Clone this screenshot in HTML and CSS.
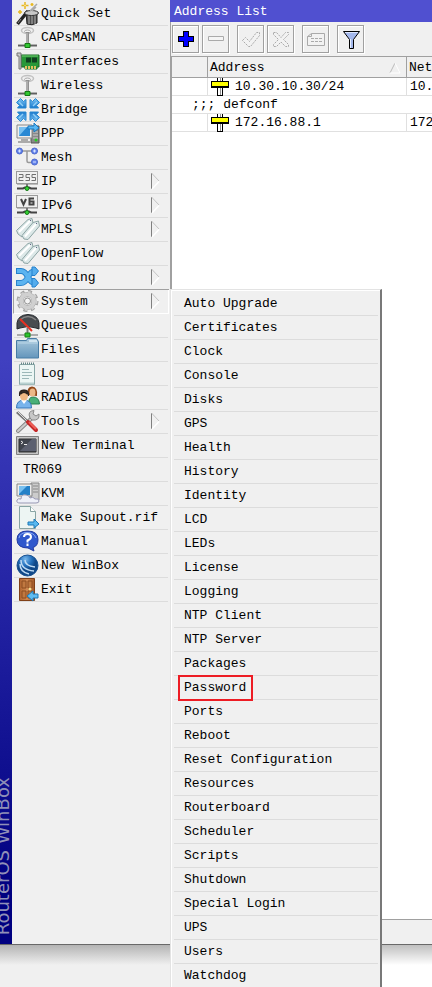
FILE: index.html
```html
<!DOCTYPE html>
<html lang="en">
<head>
<meta charset="utf-8">
<meta name="viewport" content="width=device-width, initial-scale=1">
<title>RouterOS WinBox</title>
<link rel="stylesheet" href="styles.css">
</head>
<body>
<svg class="defs" aria-hidden="true">
  <defs>
    <linearGradient id="sky" x2="0" y2="1"><stop offset="0" stop-color="#7cc4f4"/><stop offset="1" stop-color="#1878cc"/></linearGradient>
    <linearGradient id="folder" x2="0" y2="1"><stop offset="0" stop-color="#a8c8dc"/><stop offset="1" stop-color="#6496bc"/></linearGradient>
    <linearGradient id="wood" x2="1" y2="0"><stop offset="0" stop-color="#b06430"/><stop offset=".5" stop-color="#d08850"/><stop offset="1" stop-color="#a05828"/></linearGradient>
    <radialGradient id="globe" cx=".4" cy=".2"><stop offset="0" stop-color="#78b8ec"/><stop offset=".6" stop-color="#2470bc"/><stop offset="1" stop-color="#104888"/></radialGradient>
    <symbol id="antenna" viewBox="0 0 24 24">
      <ellipse cx="11.500" cy="4.500" rx="6" ry="3" fill="none" stroke="#c0c0c0" stroke-width="1.500"/>
      <ellipse cx="11.500" cy="5.500" rx="3" ry="1.500" fill="none" stroke="#a8a8a8"/>
      <path d="M11.500 6v12" stroke="#909090" stroke-width="3"/>
      <path d="M11 7v10" stroke="#c8c8c8"/>
      <path d="M2 19.500h19" stroke="#606060" stroke-width="2"/>
      <path d="M2 18.500h19" stroke="#b0b0b0"/>
      <path d="M9 17.500h5v4h-5z" fill="#32c832" stroke="#147814"/>
    </symbol>
    <symbol id="tags" viewBox="0 0 24 24">
      <g fill="#dce8e8" stroke="#8ca4a4" stroke-linejoin="round">
        <path d="M.500 12.500L12 1.500L16 .500L17 5L6 19L2 16Z"/>
        <path d="M6 17.500L17 4.500L22.500 3L23.500 8L12 21.500L8 21Z"/>
      </g>
      <path d="M3 14L14 3M9 18.500L20 6" stroke="#fff" stroke-width="2"/>
      <path d="M14 2.500h1M20 5.500h1" stroke="#668"/>
    </symbol>
    <symbol id="netplug" viewBox="0 0 24 24">
      <rect x=".500" y="1.500" width="21" height="12" fill="#f0f0f0" stroke="#9a9a9a"/>
      <path d="M1 14.500h21" stroke="#bbb"/>
      <path d="M11 14v4" stroke="#777" stroke-width="2"/>
      <path d="M1 18.500h6l2-1h4l2 1h6" fill="none" stroke="#444" stroke-width="2"/>
      <circle cx="11" cy="18.500" r="2" fill="#32d232" stroke="#147814"/>
    </symbol>
    <symbol id="sub" viewBox="0 0 10 18">
      <path d="M1.500 17V1" stroke="#808080"/>
      <path d="M1.500 1L9 9" stroke="#c4c4c4"/>
      <path d="M2 17L9 9.500" stroke="#fff" stroke-width="1.500"/>
    </symbol>
    <symbol id="inward" viewBox="0 0 12 12">
      <path d="M.500 4.500L4.500 .500L7.500 3.500L10 1.500V10H1.500L3.500 7.500Z" fill="url(#sky)" stroke="#2888d0" stroke-linejoin="round"/>
      <path d="M3 4L7 8" stroke="#90d0f8" stroke-width="1.500"/>
    </symbol>
    <symbol id="pin" viewBox="0 0 18 18">
      <g shape-rendering="crispEdges">
        <path d="M6 0h6v18h-6z" fill="#000"/>
        <path d="M7 0h4v17h-4z" fill="#fff"/>
        <path d="M9 0h1v17h-1z" fill="#909090"/>
        <path d="M0 3h18v7h-18z" fill="#000"/>
        <path d="M1 4h16v4h-16z" fill="#ff0"/>
      </g>
    </symbol>
  </defs>
</svg>

<div class="app">
  <aside class="brand"><span>RouterOS WinBox</span></aside>

  <nav class="sidebar" aria-label="Main menu">
    <ul class="menu">
      <li><button type="button"><svg class="icon" viewBox="0 0 24 24"><path d="M1.500 22L12 9" stroke="#222" stroke-width="3.500"/><path d="M2 21L5 17" stroke="#888"/><path d="M10 11L11 22Q16 24 21 21L21 11Z" fill="#505050" stroke="#222"/><path d="M13 13v9M16 13v9M19 13v9" stroke="#b0b0b0"/><ellipse cx="15.500" cy="11" rx="7" ry="2.500" fill="#c8c8c8" stroke="#333"/><path d="M14 9L21 2M16 9L20 5" stroke="#aaa" stroke-width="1.500"/><path d="M9 0v7M5.500 3.500h7M4 8v4M2 10h4M16 1v3M14.500 2.500h3" stroke="#e8b820" stroke-width="1.500"/><path d="M8.500 3.500h1" stroke="#fff"/></svg>Quick Set</button></li>
      <li><button type="button"><svg class="icon"><use href="#antenna"/></svg>CAPsMAN</button></li>
      <li><button type="button"><svg class="icon" viewBox="0 0 24 24"><path d="M5 5h18v12h-2v2h-12v-2h-4z" fill="#289838" stroke="#146820"/><path d="M6 6h16" stroke="#70cc70"/><path d="M10 7.500h5v5h-5zM16 7.500h5v5h-5z" fill="#104020"/><path d="M9 17.500h12" stroke="#e0c060" stroke-width="3" stroke-dasharray="2 1"/><path d="M1 3h4v16h-2v-13h-2z" fill="#ccc" stroke="#777"/></svg>Interfaces</button></li>
      <li><button type="button"><svg class="icon"><use href="#antenna"/></svg>Wireless</button></li>
      <li><button type="button"><svg class="icon" viewBox="0 0 24 24"><use href="#inward" width="12" height="12"/><use href="#inward" width="12" height="12" transform="matrix(-1 0 0 1 24 0)"/><use href="#inward" width="12" height="12" transform="matrix(1 0 0 -1 0 24)"/><use href="#inward" width="12" height="12" transform="matrix(-1 0 0 -1 24 24)"/></svg>Bridge</button></li>
      <li><button type="button"><svg class="icon" viewBox="0 0 24 24"><path d="M15 4h8v17h-8z" fill="#888" stroke="#555"/><path d="M17 10h5M17 13h5M17 16h5" stroke="#ccc"/><path d="M1 3h15v13h-15z" fill="#eee" stroke="#888"/><path d="M3 5h11v9h-11z" fill="#2888d4"/><path d="M3 14L11 5H3z" fill="#78c0f0"/><path d="M5 17h7v2h3v2h-13v-2h3z" fill="#aaa"/><circle cx="20" cy="18" r="1.500" fill="#2c2"/><path d="M12 4h6V1l5 5l-5 4V7h-6z" fill="#58b8f4" stroke="#1878c0"/></svg>PPP</button></li>
      <li><button type="button"><svg class="icon" viewBox="0 0 24 24"><path d="M4 5h14M11 5v10q0 1.500 1.500 1.500h5" fill="none" stroke="#999" stroke-width="1.500"/><g fill="#6484ec" stroke="#4c68cc"><circle cx="3.500" cy="5" r="3"/><circle cx="18.500" cy="5" r="3"/><circle cx="18.500" cy="16" r="3"/></g><path d="M2 5h3M3.500 3.500v3M17 5h3M18.500 3.500v3M17 16h3" stroke="#d8e4ff"/></svg>Mesh</button></li>
      <li><button type="button"><svg class="icon" viewBox="0 0 24 24"><use href="#netplug"/><path d="M3 4.500h4v3h-4v3h4.500M14 4.500h-4v3h3.500v3h-4M20 4.500h-4v3h3.500v3h-4" fill="none" stroke="#707070"/></svg>IP<svg class="arrow"><use href="#sub"/></svg></button></li>
      <li><button type="button"><svg class="icon" viewBox="0 0 24 24"><use href="#netplug"/><path d="M5 5l2.500 5.500L10 5M18 4.500h-4.500v6h4v-3h-4" fill="none" stroke="#444" stroke-width="2"/></svg>IPv6<svg class="arrow"><use href="#sub"/></svg></button></li>
      <li><button type="button"><svg class="icon"><use href="#tags"/></svg>MPLS<svg class="arrow"><use href="#sub"/></svg></button></li>
      <li><button type="button"><svg class="icon"><use href="#tags"/></svg>OpenFlow</button></li>
      <li><button type="button"><svg class="icon" viewBox="0 0 24 24"><g fill="none"><path d="M0 17h5Q9 17 12 11T19 5" stroke="#2c84cc" stroke-width="6"/><path d="M0 5h5Q9 5 12 11T19 17" stroke="#2480cc" stroke-width="6"/><path d="M1 17h4Q9 17 12 11T19 5M1 5h4Q9 5 12 11T19 17" stroke="#5cb4f0" stroke-width="4"/></g><path d="M16 1h3L22.500 5L19 9.500H16ZM16 12.500h3L22.500 17L19 21H16Z" fill="#54acec" stroke="#2480cc" stroke-linejoin="round"/></svg>Routing<svg class="arrow"><use href="#sub"/></svg></button></li>
      <li class="open"><button type="button" aria-expanded="true"><svg class="icon" viewBox="0 0 24 24"><circle cx="11.500" cy="11" r="9" fill="none" stroke="#a0a0a0" stroke-width="4" stroke-dasharray="3.700 3.400"/><circle cx="11.500" cy="11" r="6.500" fill="none" stroke="#a0a0a0" stroke-width="5"/><circle cx="11.500" cy="11" r="6.500" fill="none" stroke="#d0d0d0" stroke-width="4"/><circle cx="11.500" cy="11" r="9" fill="none" stroke="#d0d0d0" stroke-width="2" stroke-dasharray="2.700 4.400"/><circle cx="11.500" cy="11" r="3" fill="#f4f4f4" stroke="#909090"/></svg>System<svg class="arrow"><use href="#sub"/></svg></button>
        <ul class="submenu">
          <li><button type="button">Auto Upgrade</button></li>
          <li><button type="button">Certificates</button></li>
          <li><button type="button">Clock</button></li>
          <li><button type="button">Console</button></li>
          <li><button type="button">Disks</button></li>
          <li><button type="button">GPS</button></li>
          <li><button type="button">Health</button></li>
          <li><button type="button">History</button></li>
          <li><button type="button">Identity</button></li>
          <li><button type="button">LCD</button></li>
          <li><button type="button">LEDs</button></li>
          <li><button type="button">License</button></li>
          <li><button type="button">Logging</button></li>
          <li><button type="button">NTP Client</button></li>
          <li><button type="button">NTP Server</button></li>
          <li><button type="button">Packages</button></li>
          <li class="marked"><button type="button">Password</button></li>
          <li><button type="button">Ports</button></li>
          <li><button type="button">Reboot</button></li>
          <li><button type="button">Reset Configuration</button></li>
          <li><button type="button">Resources</button></li>
          <li><button type="button">Routerboard</button></li>
          <li><button type="button">Scheduler</button></li>
          <li><button type="button">Scripts</button></li>
          <li><button type="button">Shutdown</button></li>
          <li><button type="button">Special Login</button></li>
          <li><button type="button">UPS</button></li>
          <li><button type="button">Users</button></li>
          <li><button type="button">Watchdog</button></li>
        </ul>
      </li>
      <li><button type="button"><svg class="icon" viewBox="0 0 24 24"><path d="M1 15V9Q2 1 12 .500Q22 1 23 9v6l-3-1q-8-3-16 0z" fill="#484c50" stroke="#24282c"/><path d="M4 6Q12-1 20 6" fill="none" stroke="#888" stroke-width="1.500"/><path d="M4 5L16 17" stroke="#e83020" stroke-width="2"/><path d="M11.500 14v5" stroke="#777" stroke-width="2"/><path d="M1 21h21" stroke="#666"/><path d="M9 19h5v4h-5z" fill="#2cc42c" stroke="#168016"/></svg>Queues</button></li>
      <li><button type="button"><svg class="icon" viewBox="0 0 24 24"><path d="M.500 20V2.500h10l1-2h9l2 3V20z" fill="url(#folder)" stroke="#487ca4"/><path d="M13 3h8" stroke="#d0e4f0" stroke-width="2"/><path d="M2 5h20" stroke="#bcd8e8"/></svg>Files</button></li>
      <li><button type="button"><svg class="icon" viewBox="0 0 24 24"><path d="M3.500 2.500h15v20h-15z" fill="#ecf6f4" stroke="#8aa8a8"/><path d="M5 1.500h13" stroke="#688" stroke-width="2" stroke-dasharray="1 1"/><path d="M6 7.500h7M6 10.500h10M6 13.500h10M6 16.500h7" stroke="#9cb8b8"/><path d="M4 21.500h14" stroke="#b8d0d0" stroke-width="2"/></svg>Log</button></li>
      <li><button type="button"><svg class="icon" viewBox="0 0 24 24"><path d="M13 18q-1-7 4-7q6 0 6.500 7z" fill="#48b078" stroke="#288050"/><path d="M12 9Q10 1 16 .500Q22 1 21 10z" fill="#944818"/><ellipse cx="16.500" cy="6.500" rx="3" ry="4" fill="#ecb888"/><path d="M.500 22q0-8 7.500-8t7.500 8z" fill="#78b4ec" stroke="#3878b8"/><path d="M5 14l3 4l3-4z" fill="#fff"/><path d="M3 10Q2 3 8 3.500Q14 3 13 10z" fill="#2c2420"/><ellipse cx="8" cy="10" rx="4" ry="4.500" fill="#f0b884"/><path d="M4 8Q8 4 12 8" fill="none" stroke="#2c2420" stroke-width="2"/></svg>RADIUS</button></li>
      <li><button type="button"><svg class="icon" viewBox="0 0 24 24"><path d="M2 21L17 7" stroke="#888" stroke-width="4" stroke-linecap="round"/><path d="M2 21L17 7" stroke="#ccc" stroke-width="2" stroke-linecap="round"/><path d="M14 8Q11 1 18 .500L17 4l3 2l3-2Q24 11 16 10z" fill="#c8c8c8" stroke="#888"/><path d="M1 2L12 12" stroke="#777" stroke-width="3"/><path d="M1 1L11 11" stroke="#ddd"/><path d="M12 12L20 20" stroke="#c42828" stroke-width="4" stroke-linecap="round"/><path d="M13 12L20 19" stroke="#f06058" stroke-width="2"/></svg>Tools<svg class="arrow"><use href="#sub"/></svg></button></li>
      <li><button type="button"><svg class="icon" viewBox="0 0 24 24"><path d="M.500 2.500h22v18h-22z" fill="#c4c4c4" stroke="#808080"/><path d="M3 5h17v13h-17z" fill="#40444e" stroke="#333"/><path d="M4 17L16 5h4v12z" fill="#5c6070"/><path d="M5 7l2 1.500L5 10M8 10.500h3" fill="none" stroke="#eee"/></svg>New Terminal</button></li>
      <li class="plain"><button type="button">TR069</button></li>
      <li><button type="button"><svg class="icon" viewBox="0 0 24 24"><path d="M15 1h8v17h-8z" fill="#ccc" stroke="#888"/><path d="M17 4h5M17 7h5M17 10h5" stroke="#888"/><path d="M1 2h15v12h-15z" fill="#eee" stroke="#888"/><path d="M3 4h11v9h-11z" fill="#2480c8"/><path d="M3 12L11 4H3z" fill="#78c0f0"/><path d="M4 21q-4 0-3-3q1-2 4-1q0-5 5-4q3 0 4 3q3-2 5 1q4-1 4 2q0 2-3 2z" fill="#eef0f8" stroke="#9898b4"/></svg>KVM</button></li>
      <li><button type="button"><svg class="icon" viewBox="0 0 24 24"><path d="M3.500 .500h11l5 5V22.500h-16z" fill="#edf5f3" stroke="#88a4a4"/><path d="M14.500 .500v5h5" fill="#fff" stroke="#88a4a4"/><path d="M12 16h6v-3l5 5l-5 4v-3h-6z" fill="#58b8f0" stroke="#1c78b8"/></svg>Make Supout.rif</button></li>
      <li><button type="button"><svg class="icon" viewBox="0 0 24 24"><path d="M11.500 1Q22 1 22 9.500Q22 16 17 17.500L18 21L12 18Q1 18 1 9.500Q1 1 11.500 1z" fill="#3058cc" stroke="#2038a0"/><path d="M3 8Q4 2.500 11 2.500T20 8" fill="none" stroke="#88a8f4"/><path d="M8 7q0-3 3.500-3t3.500 3q0 2-3.500 3.500v2M11.500 13.500v2.500" fill="none" stroke="#fff" stroke-width="2"/></svg>Manual</button></li>
      <li><button type="button"><svg class="icon" viewBox="0 0 24 24"><circle cx="11.500" cy="11.500" r="10.500" fill="url(#globe)" stroke="#185090"/><path d="M5 6q0 10 13 11M9 6q0 6 10 7M4 10q0 8 9 10" fill="none" stroke="#c0dcf4" stroke-width="1.500"/></svg>New WinBox</button></li>
      <li><button type="button"><svg class="icon" viewBox="0 0 24 24"><path d="M3.500 .500h15v22h-15z" fill="url(#wood)" stroke="#804018"/><path d="M6 3h4v7H6zM12 3h4v7h-4zM6 13h4v7H6zM12 13h4v7h-4z" fill="#c07840" stroke="#8c4c20"/><circle cx="14" cy="11" r="1.500" fill="#f4dc90"/><path d="M22 16h-5v-3l-6 5l6 5v-3h5z" fill="#60bcf0" stroke="#1c78b8"/></svg>Exit</button></li>
    </ul>
  </nav>

  <main class="window">
    <h1 class="title">Address List</h1>
    <div class="toolbar">
      <button type="button" aria-label="Add"><svg viewBox="0 0 24 24" shape-rendering="crispEdges"><path d="M9 4h6v5h5v6h-5v5h-6v-5h-5v-6h5z" fill="#000"/><path d="M10 5h4v5h5v4h-5v5h-4v-5h-5v-4h5z" fill="#00f"/></svg></button>
      <button type="button" aria-label="Remove" disabled><svg viewBox="0 0 24 24"><path d="M4.500 9.500h15v4h-15z" fill="#f4f4f4" stroke="#aaa"/></svg></button>
      <button type="button" class="gap" aria-label="Enable" disabled><svg viewBox="0 0 24 24"><path d="M3.500 13.500l3-3l4 4l7-9h3v3l-9 11h-2z" fill="#f2f2f2" stroke="#aaa" stroke-dasharray="2 1"/></svg></button>
      <button type="button" aria-label="Disable" disabled><svg viewBox="0 0 24 24"><path d="M4.500 5.500h3l4.500 5l4.500-5h3v2l-5 5l5 5v2h-3l-4.500-4.500L7.500 19.500h-3v-2l5-5l-5-5z" fill="#f2f2f2" stroke="#aaa" stroke-dasharray="2 1"/></svg></button>
      <button type="button" class="gap" aria-label="Comment" disabled><svg viewBox="0 0 24 24"><path d="M3.500 18.500v-9l4-3h13v12zM3.500 9.500h4v-3" fill="#f2f2f2" stroke="#aaa"/><path d="M7 11.500h11M7 14.500h11" stroke="#aaa" stroke-dasharray="3 1"/></svg></button>
      <button type="button" class="gap" aria-label="Filter"><svg viewBox="0 0 24 24"><path d="M4.500 4.500h16l-6 8v9h-4v-9z" fill="#a4b8ec" stroke="#000"/><path d="M6 5.500h13" stroke="#dce6ff"/><path d="M11.500 12v9" stroke="#e8f0ff"/></svg></button>
    </div>
    <div class="list">
      <table>
        <colgroup><col class="c-flag"><col class="c-address"><col></colgroup>
        <thead><tr><th></th><th scope="col"><span class="sort">Address<svg viewBox="0 0 12 12" aria-hidden="true"><path d="M1 11L6 1" stroke="#bbb"/><path d="M6 1L11 11H1" fill="none" stroke="#fff"/></svg></span></th><th scope="col">Net</th></tr></thead>
        <tbody>
          <tr><td></td><td><span class="addr"><svg><use href="#pin"/></svg>10.30.10.30/24</span></td><td>10.</td></tr>
          <tr><td class="comment" colspan="3">;;; defconf</td></tr>
          <tr><td></td><td><span class="addr"><svg><use href="#pin"/></svg>172.16.88.1</span></td><td>172</td></tr>
        </tbody>
      </table>
    </div>
    <footer class="status"></footer>
  </main>
</div>
<div class="below"></div>
</body>
</html>
```
FILE: styles.css
```css
* { box-sizing: border-box; }

body {
  margin: 0;
  min-height: 100vh;
  display: flex;
  flex-direction: column;
  overflow-x: hidden;
  background: #fff;
  color: #000;
  font: 13px/18px "Liberation Mono", monospace;
}

button {
  font: inherit;
  color: inherit;
  border: 0;
  padding: 0;
  background: none;
  text-align: left;
}

.defs { position: absolute; width: 0; height: 0; }

.app {
  flex: 1;
  display: grid;
  grid-template-columns: 12px 158px 1fr;
  background: #f0f0f0;
  border-bottom: 1px solid #696969;
}

.brand {
  display: flex;
  justify-content: flex-end;
  align-items: flex-end;
  padding: 0 0 9px;
  overflow: hidden;
  background: linear-gradient(#4040c0 0, #4040c0 38%, #000080 95%);
  color: #9090b8;
  font: 18px/18px "DejaVu Sans", sans-serif;
}

.brand span {
  writing-mode: vertical-rl;
  transform: rotate(180deg);
  white-space: nowrap;
}

.sidebar { padding: 2px 2px 0; }

.menu, .submenu { list-style: none; margin: 0; padding: 0; }

.menu > li {
  height: 24px;
  border-bottom: 1px solid #dcdcdc;
}

.menu > li > button {
  display: flex;
  align-items: center;
  gap: 1px;
  width: 100%;
  height: 24px;
  padding: 0 8px 0 2px;
}

.menu > .plain > button { padding-left: 9px; }

.icon { flex: none; width: 24px; height: 24px; }

.arrow { width: 10px; height: 18px; margin: 0 0 2px auto; }

.menu > .open {
  position: relative;
  margin: 0 -1px;
  border: solid #fff;
  border-width: 0 1px 1px;
  border-left-color: #a0a0a0;
  box-shadow: 0 -1px #a0a0a0;
}

.submenu {
  position: absolute;
  z-index: 2;
  top: -1px;
  left: 156px;
  width: 212px;
  padding: 1px 1px 0 2px;
  background: #f0f0f0;
  border: solid #e3e3e3;
  border-width: 1px 2px 0 1px;
  border-right-color: #787878;
  box-shadow: inset 1px 1px #fff;
}

.submenu li {
  height: 24px;
  margin: 0 1px;
  border-bottom: 1px solid #dcdcdc;
}

.submenu li:first-child { height: 25px; padding-top: 1px; }
.submenu li:last-child { height: 23px; border: 0; }

.submenu button {
  width: 100%;
  height: 24px;
  padding-left: 10px;
}

.submenu .marked button {
  width: 75px;
  height: 26px;
  margin: -1px 0 0 4px;
  padding: 0 4px;
  border: 2px solid #ed1c24;
}

.window {
  display: flex;
  flex-direction: column;
  min-width: 0;
}

.title {
  margin: 0;
  padding: 3px 4px;
  height: 22px;
  background: #5050d0;
  color: #fff;
  font: inherit;
}

.toolbar {
  display: flex;
  gap: 3px;
  height: 34px;
  padding: 3px 1px;
  border-left: 1px solid #a0a0a0;
}

.toolbar button {
  display: grid;
  place-items: center;
  width: 27px;
  height: 28px;
  border: 1px solid #a0a0a0;
  box-shadow: inset 1px 1px #fff, 1px 1px #fff;
}

.toolbar .gap { margin-left: 5px; }

.toolbar svg { width: 24px; height: 24px; }

.list {
  flex: 1;
  overflow: hidden;
  background: #fff;
  border: solid #a0a0a0;
  border-width: 1px 0 1px 2px;
}

table {
  width: 100%;
  table-layout: fixed;
  border-collapse: separate;
  border-spacing: 0;
}

.c-flag { width: 36px; }
.c-address { width: 199px; }

th {
  height: 21px;
  padding: 2px 2px 0;
  background: #f0f0f0;
  border: solid #a0a0a0;
  border-width: 0 1px 1px 0;
  font-weight: normal;
  text-align: left;
}

td {
  height: 18px;
  padding: 0 3px;
  border: solid #e0e0e0;
  border-width: 0 1px 1px 0;
  line-height: 17px;
  white-space: nowrap;
}

th:last-child, td:last-child { border-right: 0; }

td.comment { padding-left: 20px; }

.sort {
  display: flex;
  align-items: center;
  justify-content: space-between;
}

.sort svg { width: 12px; height: 12px; margin-right: 3px; }

.addr {
  display: flex;
  align-items: center;
  gap: 6px;
  height: 17px;
}

.addr svg { flex: none; width: 18px; height: 18px; }

.status { height: 24px; }

.below {
  height: 42px;
  background:
    linear-gradient(rgba(0, 0, 0, .25), rgba(0, 0, 0, 0) 20px),
    linear-gradient(to right, #f0f0f0 170px, #fff 170px);
}
```
